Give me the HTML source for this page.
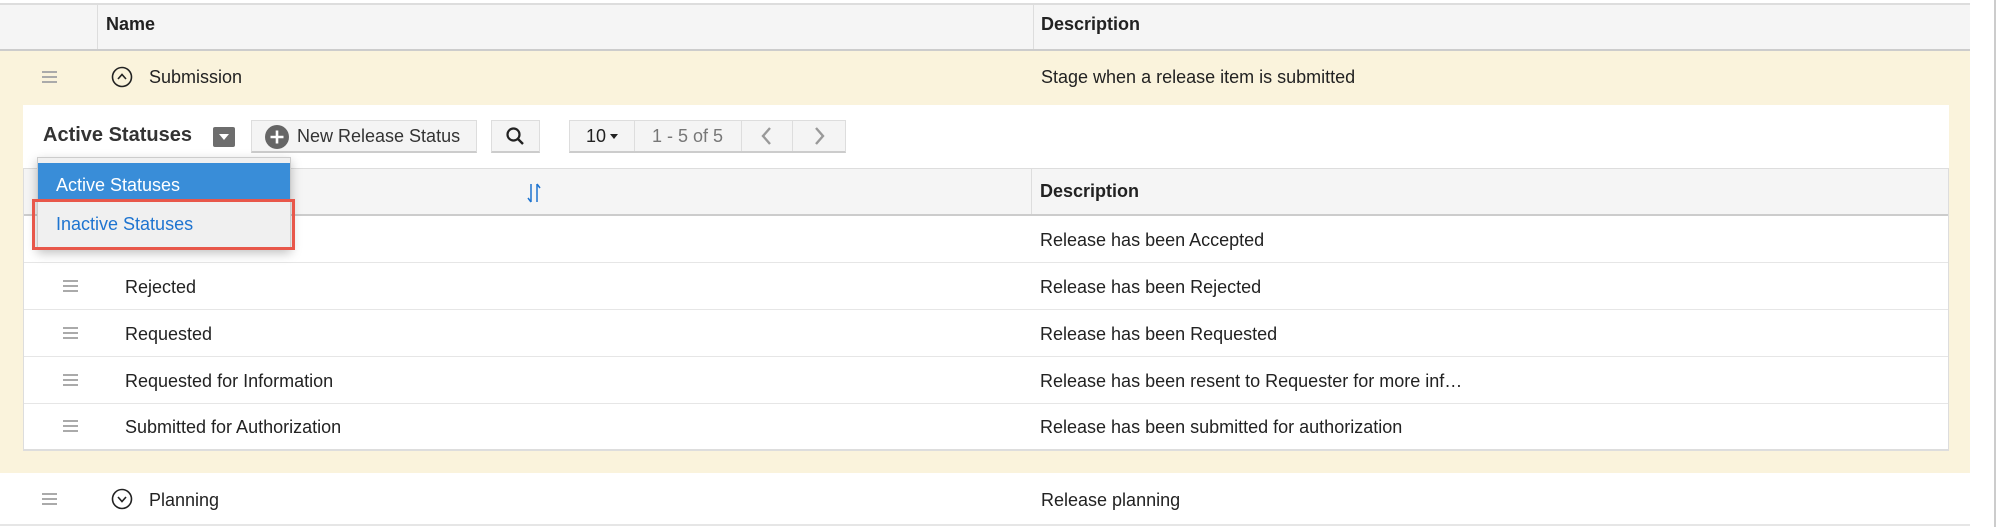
<!DOCTYPE html>
<html><head><meta charset="utf-8"><style>
*{box-sizing:border-box;margin:0;padding:0}
body{width:2000px;height:527px;background:#fff;font-family:"Liberation Sans",sans-serif;font-size:18px;color:#222;position:relative;overflow:hidden}
.a{position:absolute}
.t{position:absolute;white-space:nowrap;line-height:1}
.hb{position:absolute;width:15px;height:12px;border-top:2px solid #aaa;border-bottom:2px solid #aaa}
.hb:after{content:"";position:absolute;left:0;right:0;top:3px;border-top:2px solid #aaa}
.btn{position:absolute;background:#f4f4f4;border:1px solid #ddd;border-bottom:2px solid #ccc}
</style></head><body>
<!-- outer header -->
<div class="a" style="left:0;top:3px;width:1970px;height:48px;background:#f5f5f5;border-top:2px solid #ddd;border-bottom:2px solid #ccc"></div>
<div class="a" style="left:97px;top:5px;width:1px;height:44px;background:#ddd"></div>
<div class="a" style="left:1033px;top:5px;width:1px;height:44px;background:#ddd"></div>
<div class="t" style="left:106px;top:15px;font-weight:bold">Name</div>
<div class="t" style="left:1041px;top:15px;font-weight:bold">Description</div>
<div class="a" style="left:1994px;top:0;width:2px;height:527px;background:#ccc"></div>
<!-- yellow expanded -->
<div class="a" style="left:0;top:51px;width:1970px;height:422px;background:#faf3dc"></div>
<div class="hb" style="left:42px;top:71px"></div>
<svg class="a" style="left:111px;top:66px" width="22" height="22"><circle cx="11" cy="11" r="9.5" fill="none" stroke="#222" stroke-width="1.6"/><path d="M7 13 L11 8.5 L15 13" fill="none" stroke="#222" stroke-width="1.6"/></svg>
<div class="t" style="left:149px;top:68px">Submission</div>
<div class="t" style="left:1041px;top:68px">Stage when a release item is submitted</div>
<!-- inner panel -->
<div class="a" style="left:23px;top:105px;width:1926px;height:346px;background:#fff"></div>
<div class="t" style="left:43px;top:125px;font-weight:bold;font-size:20px;color:#333">Active Statuses</div>
<div class="a" style="left:213px;top:127px;width:22px;height:20px;background:#6d6d6d;border-radius:2px"></div>
<div class="a" style="left:219px;top:134px;width:0;height:0;border-left:5px solid transparent;border-right:5px solid transparent;border-top:6px solid #fff"></div>
<div class="btn" style="left:251px;top:120px;width:226px;height:33px"></div>
<svg class="a" style="left:264px;top:124px" width="26" height="26"><circle cx="13" cy="13" r="12" fill="#666"/><path d="M13 6.5V19.5M6.5 13H19.5" stroke="#fff" stroke-width="2.6"/></svg>
<div class="t" style="left:297px;top:127px;color:#333">New Release Status</div>
<div class="btn" style="left:491px;top:120px;width:49px;height:33px"></div>
<svg class="a" style="left:505px;top:126px" width="20" height="20"><circle cx="8.5" cy="8.5" r="6" fill="none" stroke="#222" stroke-width="2.2"/><path d="M13 13L18 18" stroke="#222" stroke-width="2.4"/></svg>
<div class="btn" style="left:569px;top:120px;width:277px;height:33px"></div>
<div class="a" style="left:634px;top:120px;width:1px;height:31px;background:#ddd"></div>
<div class="a" style="left:741px;top:120px;width:1px;height:31px;background:#ddd"></div>
<div class="a" style="left:792px;top:120px;width:1px;height:31px;background:#ddd"></div>
<div class="t" style="left:586px;top:127px">10</div>
<div class="a" style="left:610px;top:134px;border-left:4px solid transparent;border-right:4px solid transparent;border-top:5px solid #222"></div>
<div class="t" style="left:652px;top:127px;color:#777">1 - 5 of 5</div>
<svg class="a" style="left:757px;top:126px" width="20" height="20"><path d="M13 2L6 10L13 18" fill="none" stroke="#999" stroke-width="2.4"/></svg>
<svg class="a" style="left:809px;top:126px" width="20" height="20"><path d="M7 2L14 10L7 18" fill="none" stroke="#999" stroke-width="2.4"/></svg>
<!-- inner table -->
<div class="a" style="left:23px;top:168px;width:1926px;height:283px;border:1px solid #ddd;border-bottom:2px solid #ddd"></div>
<div class="a" style="left:24px;top:169px;width:1924px;height:47px;background:#f5f5f5;border-bottom:2px solid #ccc"></div>
<div class="a" style="left:1031px;top:169px;width:1px;height:45px;background:#ddd"></div>
<div class="t" style="left:1040px;top:182px;font-weight:bold">Description</div>
<svg class="a" style="left:526px;top:182px" width="16" height="22"><path d="M5 2V20M5 20L2 16M11 20V2M11 2L14 6" fill="none" stroke="#1e74d0" stroke-width="1.5"/></svg>
<div class="a" style="left:24px;top:262px;width:1924px;height:1px;background:#e6e6e6"></div>
<div class="a" style="left:24px;top:309px;width:1924px;height:1px;background:#e6e6e6"></div>
<div class="a" style="left:24px;top:356px;width:1924px;height:1px;background:#e6e6e6"></div>
<div class="a" style="left:24px;top:403px;width:1924px;height:1px;background:#e6e6e6"></div>
<div class="t" style="left:1040px;top:231px">Release has been Accepted</div>
<div class="hb" style="left:63px;top:280px"></div><div class="t" style="left:125px;top:278px">Rejected</div><div class="t" style="left:1040px;top:278px">Release has been Rejected</div>
<div class="hb" style="left:63px;top:327px"></div><div class="t" style="left:125px;top:325px">Requested</div><div class="t" style="left:1040px;top:325px">Release has been Requested</div>
<div class="hb" style="left:63px;top:374px"></div><div class="t" style="left:125px;top:372px">Requested for Information</div><div class="t" style="left:1040px;top:372px">Release has been resent to Requester for more inf…</div>
<div class="hb" style="left:63px;top:420px"></div><div class="t" style="left:125px;top:418px">Submitted for Authorization</div><div class="t" style="left:1040px;top:418px">Release has been submitted for authorization</div>
<!-- dropdown -->
<div class="a" style="left:37px;top:157px;width:254px;height:92px;background:#f0f0f0;border:1px solid #ccc;box-shadow:0 4px 10px rgba(0,0,0,.25)"></div>
<div class="a" style="left:38px;top:163px;width:252px;height:37px;background:#398dd8"></div>
<div class="t" style="left:56px;top:176px;color:#fff;font-size:18px">Active Statuses</div>
<div class="a" style="left:32px;top:199px;width:263px;height:51px;border:3px solid #e8574a"></div>
<div class="t" style="left:56px;top:215px;color:#1e74d0;font-size:18px">Inactive Statuses</div>
<!-- planning -->
<div class="hb" style="left:42px;top:493px"></div>
<svg class="a" style="left:111px;top:488px" width="22" height="22"><circle cx="11" cy="11" r="9.5" fill="none" stroke="#222" stroke-width="1.6"/><path d="M7 9 L11 13.5 L15 9" fill="none" stroke="#222" stroke-width="1.6"/></svg>
<div class="t" style="left:149px;top:491px">Planning</div>
<div class="t" style="left:1041px;top:491px">Release planning</div>
<div class="a" style="left:0;top:524px;width:1970px;height:2px;background:#e6e6e6"></div>
</body></html>
